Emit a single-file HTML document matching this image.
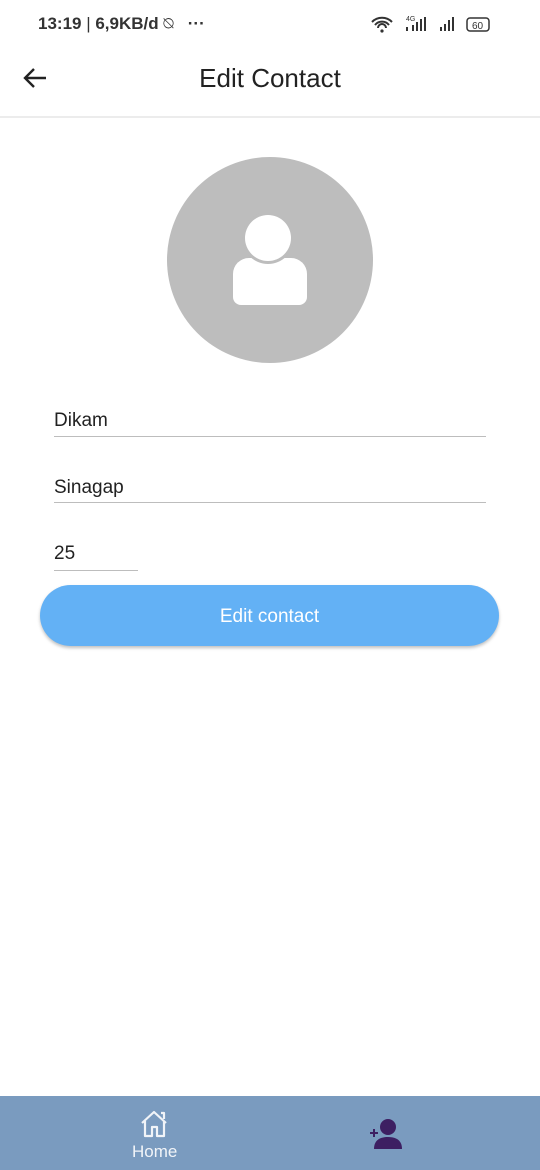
<!DOCTYPE html>
<html><head><meta charset="utf-8"><style>
body{margin:0;width:540px;height:1170px;position:relative;background:#fff;font-family:"Liberation Sans",sans-serif;overflow:hidden}
.a{position:absolute}
.field{position:absolute;left:54px;border-bottom:1.5px solid #bdbdbd;font-size:19px;color:#222;padding-top:2px;box-sizing:border-box}
</style></head><body>
<div class="a" style="left:38px;top:14px;font-size:17px;font-weight:bold;color:#333">13:19 <span style="font-weight:normal">|</span> 6,9KB/d <span style="font-weight:normal">⍉</span> &nbsp; ···</div>
<div class="a" style="left:370px;top:14px;font-size:13px;color:#333">
<svg width="130" height="20"><path d="M2 8a14 14 0 0 1 20 0M5 11a9 9 0 0 1 14 0M8 14a4 4 0 0 1 8 0" stroke="#333" stroke-width="2" fill="none"/><circle cx="12" cy="17" r="1.6" fill="#333"/><text x="36" y="7" font-size="7" fill="#333">4G</text><rect x="36" y="13" width="2" height="4" fill="#333"/><rect x="42" y="11" width="2" height="6" fill="#333"/><rect x="46" y="8" width="2" height="9" fill="#333"/><rect x="50" y="5" width="2" height="12" fill="#333"/><rect x="54" y="3" width="2" height="14" fill="#333"/><rect x="70" y="13" width="2" height="4" fill="#333"/><rect x="74" y="10" width="2" height="7" fill="#333"/><rect x="78" y="6" width="2" height="11" fill="#333"/><rect x="82" y="3" width="2" height="14" fill="#333"/><rect x="97" y="4" width="22" height="13" rx="3" stroke="#333" fill="none" stroke-width="1.5"/><text x="102" y="15" font-size="10" fill="#333">60</text></svg></div>
<svg class="a" style="left:22px;top:66px" width="26" height="24"><path d="M24 12H3M12 3 3 12l9 9" stroke="#222" stroke-width="2.4" fill="none"/></svg>
<div class="a" style="left:0;width:540px;top:63px;text-align:center;font-size:26px;color:#222">Edit Contact</div>
<div class="a" style="left:0;top:116px;width:540px;height:2px;background:#ececec"></div>
<div class="a" style="left:167px;top:157px;width:206px;height:206px;border-radius:50%;background:#bdbdbd"></div>
<div class="a" style="left:233px;top:258px;width:74px;height:47px;background:#fff;border-radius:16px 16px 8px 8px"></div>
<div class="a" style="left:245px;top:215px;width:46px;height:46px;border-radius:50%;background:#fff;box-shadow:0 0 0 3px #bdbdbd"></div>
<div class="field" style="top:408px;width:432px;height:29px">Dikam</div>
<div class="field" style="top:475px;width:432px;height:28px">Sinagap</div>
<div class="field" style="top:541px;width:84px;height:30px">25</div>
<div class="a" style="left:40px;top:585px;width:459px;height:61px;border-radius:31px;background:#63b1f5;box-shadow:0 2px 3px rgba(0,0,0,.25);color:#fff;font-size:19px;text-align:center;line-height:63px">Edit contact</div>
<div class="a" style="left:0;top:1096px;width:540px;height:74px;background:#7a9bbf"></div>
<svg class="a" style="left:139px;top:1108px" width="32" height="32"><path d="M3 15 15 4l12 11M6 13v15h7v-9h5v9h7V13M22 5h3v6" stroke="#f1f4f8" stroke-width="2.2" fill="none" stroke-linejoin="round"/></svg>
<div class="a" style="left:132px;top:1142px;font-size:17px;color:#f1f4f8">Home</div>
<svg class="a" style="left:368px;top:1118px" width="36" height="32"><circle cx="20" cy="9" r="8" fill="#3d1f62"/><path d="M6 31c0-9 6-12 14-12s14 3 14 12z" fill="#3d1f62"/><path d="M2 15h8M6 11v8" stroke="#3d1f62" stroke-width="2"/></svg>
</body></html>
